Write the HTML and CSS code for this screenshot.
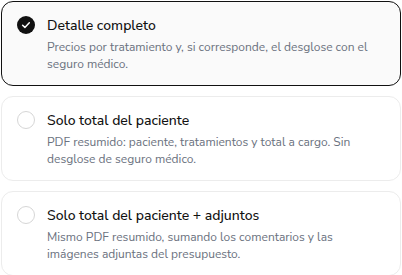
FILE: index.html
```html
<!DOCTYPE html>
<html lang="es">
<head>
<meta charset="utf-8">
<link rel="stylesheet" href="styles.css">
</head>
<body>
<div class="list">
  <div class="card selected">
    <span class="radio checked">
      <svg viewBox="0 0 18 18" width="18" height="18"><circle cx="9" cy="9" r="9" fill="#111"/><path d="M5.6 9.2l2.3 2.2 4.4-4.6" fill="none" stroke="#fff" stroke-width="1.5" stroke-linecap="round" stroke-linejoin="round"/></svg>
    </span>
    <div class="text">
      <div class="title">Detalle completo</div>
      <div class="desc">Precios por tratamiento y, si corresponde, el desglose con el seguro médico.</div>
    </div>
  </div>
  <div class="card">
    <span class="radio"></span>
    <div class="text">
      <div class="title">Solo total del paciente</div>
      <div class="desc">PDF resumido: paciente, tratamientos y total a cargo. Sin desglose de seguro médico.</div>
    </div>
  </div>
  <div class="card">
    <span class="radio"></span>
    <div class="text">
      <div class="title">Solo total del paciente + adjuntos</div>
      <div class="desc">Mismo PDF resumido, sumando los comentarios y las imágenes adjuntas del presupuesto.</div>
    </div>
  </div>
</div>
</body>
</html>
```
FILE: styles.css
```css
* { box-sizing: border-box; }
html, body { margin: 0; padding: 0; background: #fff; }
body { font-family: "Nunito Sans", Lato, "Noto Sans", sans-serif; }
.list { display: flex; flex-direction: column; gap: 10px; padding: 1px 1px 0 1px; }
.card {
  display: flex; align-items: flex-start; gap: 12px;
  height: 85px;
  padding: 14px 16px 0 15px;
  border: 1px solid #ececec; border-radius: 12px; background: #fff;
}
.card.selected { border-color: #111; background: #fafafa; }
.radio {
  flex: none; width: 18px; height: 18px; margin-top: 0;
  border: 1px solid #d6d6d6; border-radius: 50%; display: block;
}
.radio.checked { border: none; }
.radio svg { display: block; }
.title { font-size: 14px; font-weight: 500; color: #111; line-height: 20px; }
.desc { margin-top: 3px; font-size: 12px; color: #6b7280; line-height: 17px; }
```
